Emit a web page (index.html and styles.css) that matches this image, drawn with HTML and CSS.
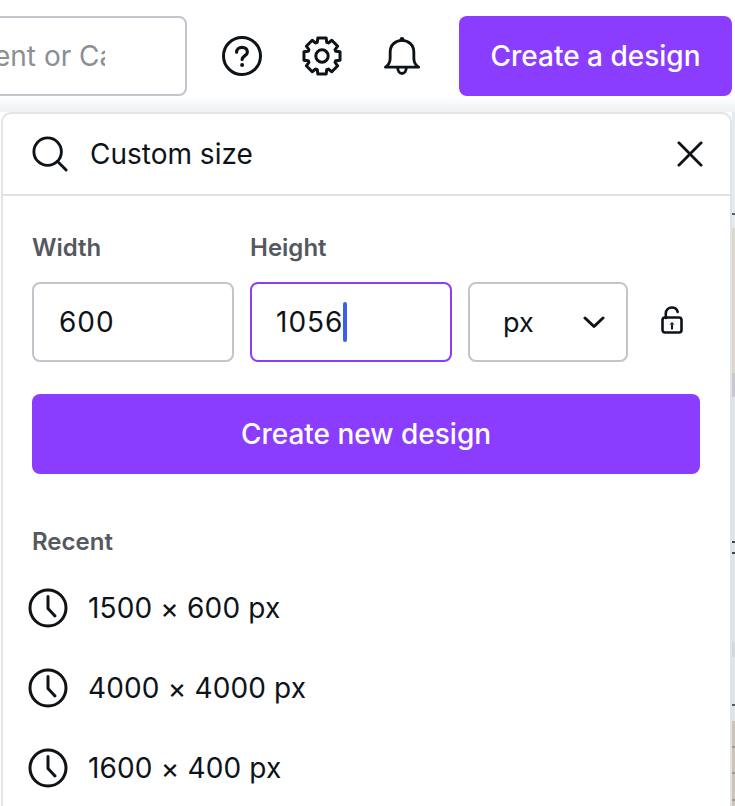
FILE: index.html
```html
<!DOCTYPE html>
<html lang="en">
<head>
<meta charset="utf-8">
<title>Custom size</title>
<link rel="stylesheet" href="styles.css">
</head>
<body>
<header class="topbar">
  <div class="search-box"><span class="search-clip"><span class="search-text">Search content or Canva</span></span></div>
  <button class="icon-btn help" aria-label="Help">
    <svg width="40" height="40" viewBox="0 0 40 40" fill="none" stroke="#0e1318"><circle cx="20" cy="20" r="18.5" stroke-width="3"/><path d="M14.6 16.2c0-3 2.4-4.9 5.4-4.9s5.4 1.9 5.4 4.6c0 4-5.3 3.9-5.3 7.6" stroke-width="3.2" stroke-linecap="round"/><circle cx="20.1" cy="29" r="2" fill="#0e1318" stroke="none"/></svg>
  </button>
  <button class="icon-btn gear" aria-label="Settings">
    <svg width="40" height="40" viewBox="0 0 40 40" fill="none" stroke="#0e1318" stroke-width="3" stroke-linejoin="round"><circle cx="20" cy="20" r="6.2"/><path d="M15.28 6.29L15.84 1.97H24.16L24.72 6.29L26.36 6.97L29.81 4.31L35.69 10.19L33.03 13.64L33.71 15.28L38.03 15.84V24.16L33.71 24.72L33.03 26.36L35.69 29.81L29.81 35.69L26.36 33.03L24.72 33.71L24.16 38.03H15.84L15.28 33.71L13.64 33.03L10.19 35.69L4.31 29.81L6.97 26.36L6.29 24.72L1.97 24.16V15.84L6.29 15.28L6.97 13.64L4.31 10.19L10.19 4.31L13.64 6.97Z"/></svg>
  </button>
  <button class="icon-btn bell" aria-label="Notifications">
    <svg width="36" height="40" viewBox="0 0 38 42" fill="none" stroke="#0e1318" stroke-width="3" stroke-linejoin="round"><path d="M1.5 32.8c3.7-2.3 5-5 5-9.300v-6.500c0-7.500 5.500-12.500 12.500-12.500s12.500 5 12.500 12.500v6.500c0 4.300 1.300 7 5 9.300z"/><path d="M14.500 33.500c0 3.500 2 6 4.500 6s4.500-2.500 4.500-6"/><circle cx="19" cy="3.500" r="2.500" fill="#0e1318" stroke="none"/></svg>
  </button>
  <button class="create-btn">Create a design</button>
</header>
<main class="stage">
  <section class="panel">
    <div class="panel-search">
      <svg class="search-icon" width="36" height="36" viewBox="0 0 38 38" fill="none" stroke="#0e1318" stroke-width="3" stroke-linecap="round"><circle cx="16.500" cy="16.500" r="14.500"/><path d="M27 27l9 9"/></svg>
      <span class="panel-query">Custom size</span>
      <svg class="close-icon" width="26" height="26" viewBox="0 0 28 28" fill="none" stroke="#0e1318" stroke-width="3" stroke-linecap="round"><path d="M2 2l24 24M26 2L2 26"/></svg>
    </div>
    <div class="panel-body">
      <form class="size-form">
        <div class="field">
          <span class="field-label">Width</span>
          <div class="field-box">600</div>
        </div>
        <div class="field">
          <span class="field-label">Height</span>
          <div class="field-box is-focus">1056<span class="caret"></span></div>
        </div>
        <div class="unit-box">
          <span>px</span>
          <svg width="22" height="14" viewBox="0 0 22 14" fill="none" stroke="#0e1318" stroke-width="3" stroke-linecap="round" stroke-linejoin="round"><path d="M2 3l9 8.500L20 3"/></svg>
        </div>
        <svg class="lock-icon" width="22" height="28" viewBox="0 0 22 28" fill="none" stroke="#0e1318" stroke-width="2.600" stroke-linejoin="round"><path d="M4.800 12V7.500c0-3.500 2.700-6 6-6 2.900 0 5.200 1.700 5.900 4.400" stroke-linecap="round"/><rect x="1.500" y="11.500" width="19" height="15" rx="2.500"/><path d="M11 23.500v-5" stroke-width="2"/><path d="M8.500 18.500l2.500-2.500 2.500 2.500z" fill="#0e1318" stroke="none"/></svg>
      </form>
      <button class="new-btn">Create new design</button>
      <h2 class="recent-title">Recent</h2>
      <ul class="recent-list">
        <li class="recent-item"><svg width="40" height="40" viewBox="0 0 40 40" fill="none" stroke="#0e1318" stroke-width="3" stroke-linecap="round" stroke-linejoin="round"><circle cx="20" cy="20" r="18"/><path d="M20 8.500v12l7 7.500"/></svg>1500 × 600 px</li>
        <li class="recent-item"><svg width="40" height="40" viewBox="0 0 40 40" fill="none" stroke="#0e1318" stroke-width="3" stroke-linecap="round" stroke-linejoin="round"><circle cx="20" cy="20" r="18"/><path d="M20 8.500v12l7 7.500"/></svg>4000 × 4000 px</li>
        <li class="recent-item"><svg width="40" height="40" viewBox="0 0 40 40" fill="none" stroke="#0e1318" stroke-width="3" stroke-linecap="round" stroke-linejoin="round"><circle cx="20" cy="20" r="18"/><path d="M20 8.500v12l7 7.500"/></svg>1600 × 400 px</li>
      </ul>
    </div>
  </section>
  <div class="backdrop-strip"></div>
</main>
</body>
</html>
```

FILE: styles.css
```css
* { box-sizing: border-box; }
html, body { margin: 0; height: 100%; overflow: hidden; }
body {
  width: 735px;
  height: 806px;
  background: #fff;
  font-family: "Inter", "Noto Sans", sans-serif;
  color: #0e1318;
  display: flex;
  flex-direction: column;
}
button { font-family: inherit; border: 0; padding: 0; background: none; color: inherit; }

.topbar {
  flex: 0 0 96px;
  display: flex;
  align-items: flex-start;
  justify-content: flex-end;
  padding: 16px 3px 0 0;
  overflow: hidden;
}
.search-box {
  flex: 0 0 207px;
  min-width: 0;
  margin-left: -20px;
  height: 80px;
  border: 2px solid #c1c6cc;
  border-radius: 8px;
  display: flex;
  align-items: center;
  padding-right: 80px;
  color: #8a8f96;
  font-size: 28px;
}
.search-clip { flex: 1; min-width: 0; overflow: hidden; white-space: nowrap; }
.search-text { display: block; margin-left: -147px; }
.icon-btn { display: flex; align-items: center; justify-content: center; margin-top: 20px; }
.help { margin-left: 35px; }
.gear { margin-left: 40px; }
.bell { margin-left: 42px; }
.create-btn {
  margin-left: 39px;
  flex: 0 0 273px;
  height: 80px;
  background: #8b3dff;
  border-radius: 8px;
  color: #fff;
  font-size: 28px;
  font-weight: 500;
}

.stage {
  flex: 1;
  display: flex;
  padding: 16px 0 0 1px;
  min-height: 0;
  background: linear-gradient(#fff, #eef0f2 16px, #fff 16px) no-repeat;
}
.panel {
  flex: 0 0 731px;
  background: #fff;
  border: 2px solid #e0e3e7;
  border-bottom: 0;
  border-radius: 10px 10px 0 0;
  display: flex;
  flex-direction: column;
}
.backdrop-strip {
  flex: 1;
  background: linear-gradient(
    #e6e9ee 0 101px,
    #55585e 101px 103px,
    #e6e9ee 103px 116px,
    #dcd8d0 116px 261px,
    #c8c9cc 261px 285px,
    #e0e3e7 285px 429px,
    #44474d 429px 431px,
    #e0e3e7 431px 440px,
    #44474d 440px 442px,
    #e0e3e7 442px 530px,
    #d5d8dc 530px 545px,
    #e0e3e7 545px 592px,
    #55585e 592px 594px,
    #e0e3e7 594px 609px,
    #ccc5b6 609px 634px,
    #9a9aa5 634px 636px,
    #ccc5b6 636px 660px,
    #9a9aa5 660px 662px,
    #ccc5b6 662px 687px,
    #9a9aa5 687px 689px,
    #ccc5b6 689px
  );
}

.panel-search {
  flex: 0 0 82px;
  display: flex;
  align-items: center;
  padding: 0 27px 0 29px;
  border-bottom: 2px solid #dfe2e6;
}
.search-icon { flex: none; }
.panel-query { flex: 1; margin-left: 22px; font-size: 28px; }
.close-icon { flex: none; }

.panel-body { padding: 37px 29px 0; }
.size-form { display: flex; align-items: flex-end; }
.field { flex: 0 0 202px; margin-right: 16px; display: flex; flex-direction: column; }
.field-label { font-size: 24px; font-weight: 600; color: #55595f; line-height: 30px; margin-bottom: 19px; }
.field-box {
  height: 80px;
  border: 2px solid #c1c6cc;
  border-radius: 8px;
  display: flex;
  align-items: center;
  padding-left: 25px;
  font-size: 28px;
  letter-spacing: 1px;
}
.field-box.is-focus { border-color: #8b3dff; padding-left: 24px; }
.caret { width: 4px; height: 40px; background: #3d5cf0; border-radius: 2px; }
.unit-box {
  flex: 0 0 160px;
  height: 80px;
  border: 2px solid #c1c6cc;
  border-radius: 8px;
  display: flex;
  align-items: center;
  justify-content: space-between;
  padding: 0 21px 0 33px;
  font-size: 27px;
}
.lock-icon { flex: none; margin: 0 0 28px 33px; }
.new-btn {
  display: block;
  width: 668px;
  height: 80px;
  margin-top: 32px;
  background: #8b3dff;
  border-radius: 8px;
  color: #fff;
  font-size: 28px;
  font-weight: 500;
}
.recent-title {
  margin: 53px 0 0;
  font-size: 24px;
  font-weight: 600;
  color: #55595f;
  line-height: 30px;
}
.recent-list { list-style: none; margin: 11px 0 0 -4px; padding: 0; }
.recent-item {
  height: 80px;
  display: flex;
  align-items: center;
  gap: 20px;
  font-size: 28px;
  letter-spacing: 0.15px;
}
.recent-item svg { flex: none; }
```
